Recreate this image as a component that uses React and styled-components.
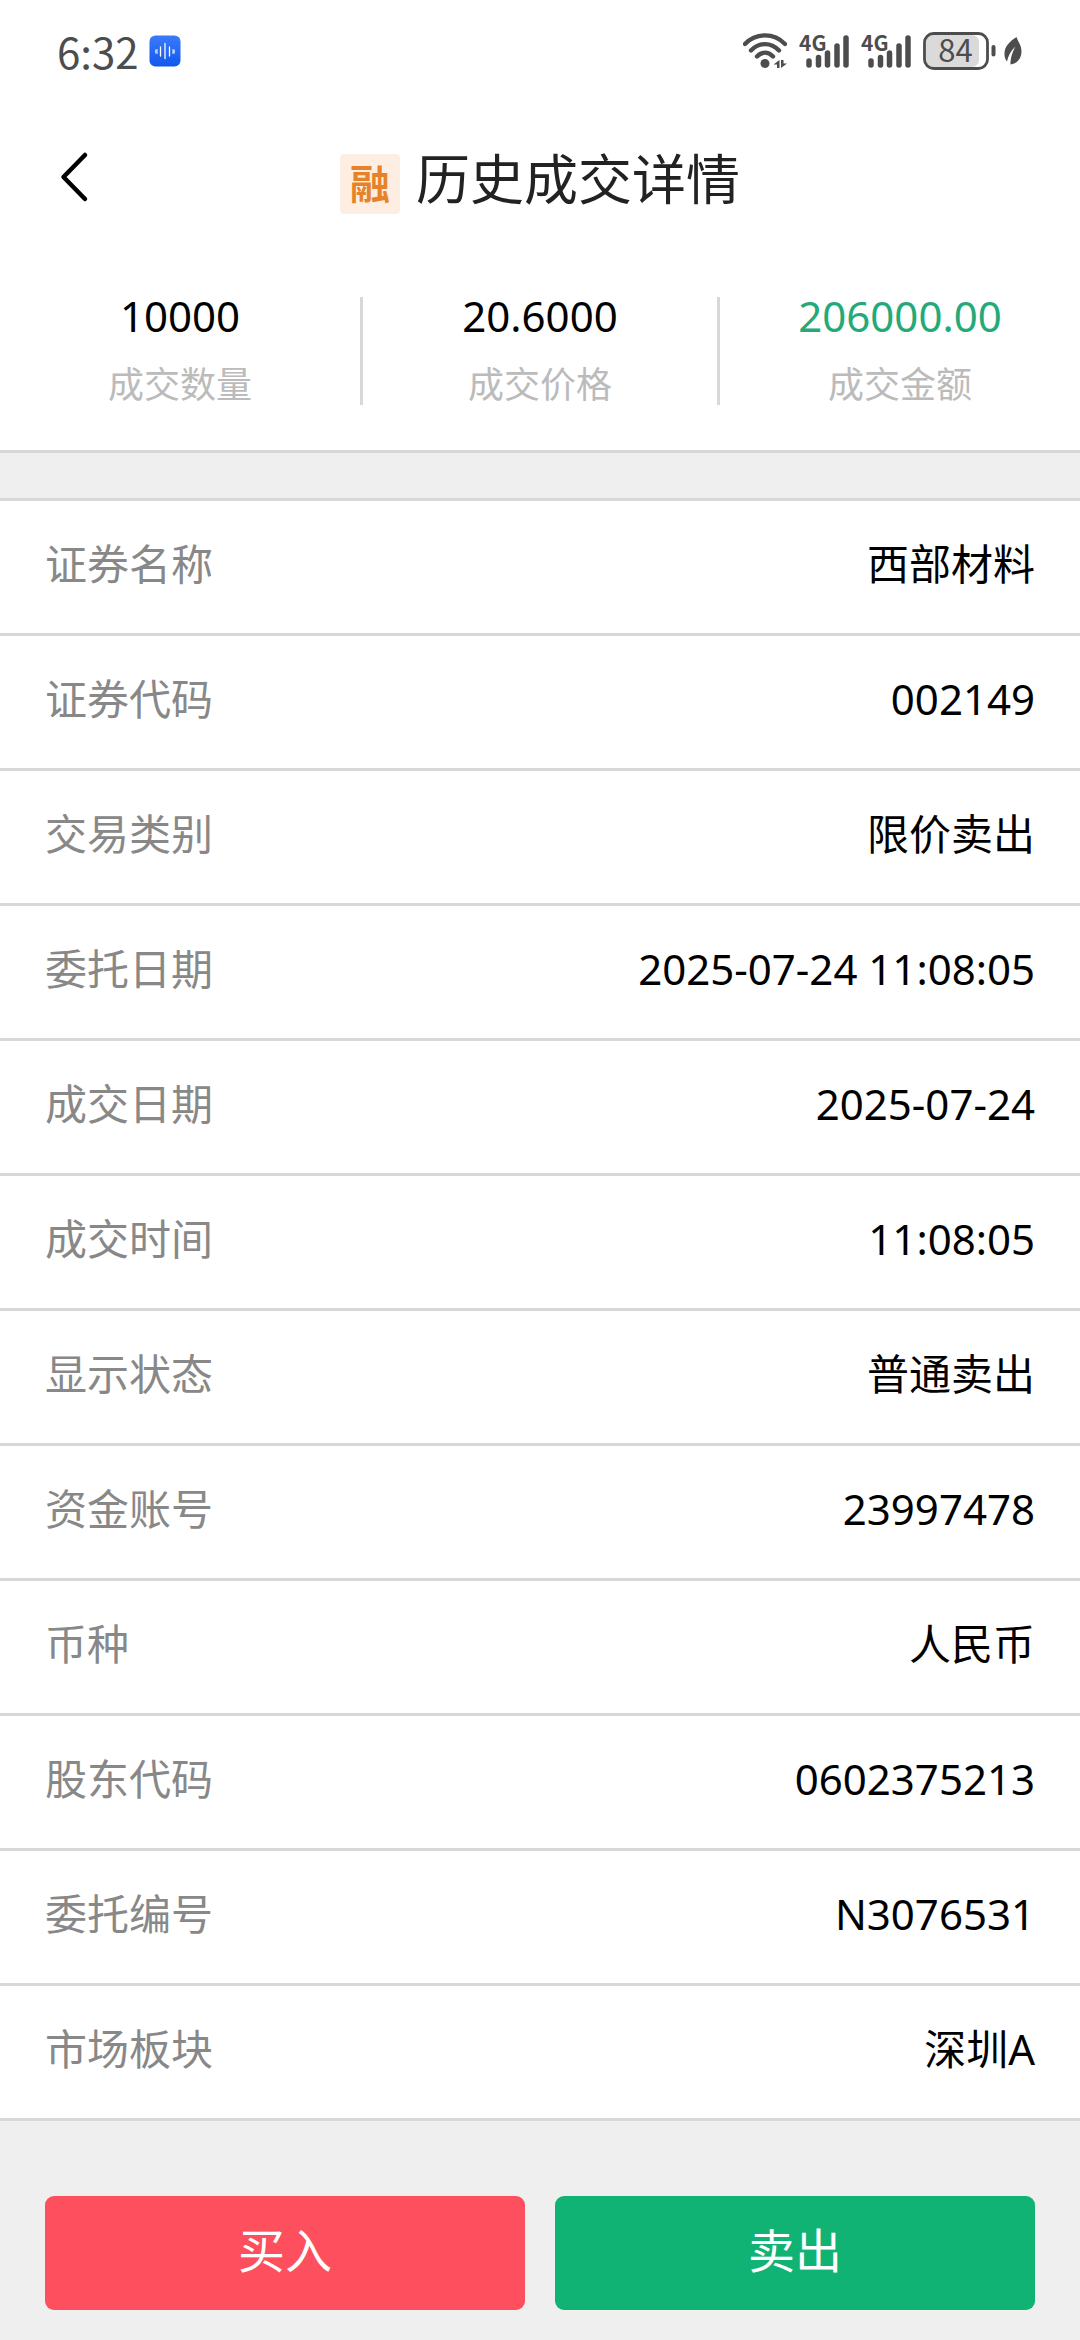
import styled, { createGlobalStyle } from "styled-components";

const GlobalStyle = createGlobalStyle`
  * {
    box-sizing: border-box;
  }
  body {
    margin: 0;
    background: #efefef;
    color: #000;
    font-family: "Noto Sans", "Noto Sans CJK SC", sans-serif;
  }
`

const Page = styled.div`
  min-height: 100vh;
  display: flex;
  flex-direction: column;
`

const StatusBar = styled.div`
  height: 104px;
  padding: 0 58px 2px 57px;
  display: flex;
  align-items: center;
  justify-content: space-between;
  background: #fff;
  color: #4d4d4d;
`

const StatusGroup = styled.div`
  display: flex;
  align-items: center;
  gap: ${(props) => props.$gap}px;
`

const Clock = styled.span`
  font-family: "Noto Sans CJK SC", sans-serif;
  font-size: 42px;
  line-height: 48px;
`

const Header = styled.header`
  height: 146px;
  padding: 0 45px;
  display: grid;
  grid-template-columns: 1fr auto 1fr;
  align-items: center;
  background: #fff;
`

const BackButton = styled.button`
  justify-self: start;
  display: flex;
  padding: 12px;
  border: 0;
  background: none;
  cursor: pointer;
`

const TitleGroup = styled.div`
  display: flex;
  align-items: center;
  gap: 16px;
`

const Badge = styled.span`
  width: 60px;
  height: 60px;
  margin-top: 14px;
  border-radius: 4px;
  background: #fdeee1;
  color: #e6832a;
  font-family: "Noto Sans CJK SC", sans-serif;
  font-size: 40px;
  font-weight: 700;
  line-height: 56px;
  text-align: center;
`

const Title = styled.h1`
  margin: 4px 0 0;
  color: #222;
  font-size: 54px;
  font-weight: 400;
  line-height: 60px;
`

const Summary = styled.section`
  padding: 47px 0 45px;
  display: grid;
  grid-template-columns: repeat(3, 1fr);
  border-bottom: 3px solid #d8d8d8;
  background: #fff;
`

const SummaryItem = styled.div`
  height: 108px;
  display: flex;
  flex-direction: column;
  align-items: center;
  gap: 24px;

  &:nth-child(2) {
    border-left: 3px solid #d8d8d8;
    border-right: 3px solid #d8d8d8;
  }
`

const SummaryValue = styled.span`
  color: ${(props) => (props.$green ? "#26a978" : "#000")};
  font-size: 42px;
  line-height: 38px;
`

const SummaryLabel = styled.span`
  color: #bbb;
  font-size: 36px;
  line-height: 52px;
`

const Details = styled.dl`
  margin: 45px 0 0;
  border-top: 3px solid #d8d8d8;
  background: #fff;
`

const Row = styled.div`
  height: 135px;
  padding: 0 45px 6px;
  display: flex;
  align-items: center;
  justify-content: space-between;
  border-bottom: 3px solid #d8d8d8;
  font-size: 42px;
  line-height: 60px;
`

const Label = styled.dt`
  color: #888;
`

const Value = styled.dd`
  margin: 0;
`

const Actions = styled.footer`
  padding: 75px 45px 30px;
  display: grid;
  grid-template-columns: 1fr 1fr;
  gap: 30px;
`

const ActionButton = styled.button`
  height: 114px;
  padding: 0 0 6px;
  border: 0;
  border-radius: 9px;
  background: ${(props) => (props.$sell ? "#11b374" : "#fd4f5d")};
  color: #fff;
  font-family: inherit;
  font-size: 47px;
  line-height: 60px;
  cursor: pointer;
`

const VoiceIcon = () => (
  <svg width="32" height="32" viewBox="0 0 32 32">
    <defs>
      <linearGradient id="voice" x1="0" y1="0" x2="0" y2="1">
        <stop offset="0" stopColor="#3a7bfb" />
        <stop offset="1" stopColor="#1257ee" />
      </linearGradient>
    </defs>
    <rect x="0.5" y="0.5" width="31" height="31" rx="6" fill="url(#voice)" />
    <path d="M7 15v3M11.500 12v9M16 8.500v15M20.500 12v9M25 15v3" stroke="#fff" strokeWidth="1.300" strokeLinecap="round" />
    <path d="M8.300 14v5M23.700 14v5" stroke="#fff" strokeWidth="0.600" />
  </svg>
)

const WifiIcon = () => (
  <svg width="44" height="36" viewBox="0 0 44 36" fill="none" stroke="#4d4d4d" strokeLinecap="round">
    <path d="M2 11C13 -0.500 31 -0.500 42 11" strokeWidth="4.400" />
    <path d="M8 17.500C16 9 28 9 36 17.500" strokeWidth="4.400" />
    <path d="M14 23.500C19 18.500 25 18.500 30 23.500" strokeWidth="4.400" />
    <circle cx="22" cy="30.500" r="4.500" fill="#4d4d4d" stroke="none" />
    <path d="M36.500 27v8h-2.500v-3.500h-3.500zM38 35v-8h2.500v3.500h3.500z" fill="#4d4d4d" stroke="none" />
  </svg>
)

/* extra room above and below the bars keeps the 4G line box inside */
const SignalIcon = () => (
  <svg width="50" height="60" viewBox="0 -12 50 60">
    <path d="M10 28v4M19.500 24.500v7.500M28.500 20v12M38 13v19M47 5v27" stroke="#4d4d4d" strokeWidth="5.500" strokeLinecap="round" />
    <text x="0" y="18" fill="#4d4d4d" stroke="#fff" strokeWidth="3" paintOrder="stroke" fontFamily="Noto Sans CJK SC, sans-serif" fontSize="21" fontWeight="700">4G</text>
  </svg>
)

const BatteryIcon = () => (
  <svg width="73" height="58" viewBox="0 -10 73 58">
    <rect x="3" y="3" width="53" height="32" rx="7" fill="#dadada" />
    <rect x="1.500" y="1.500" width="63" height="35" rx="9" fill="none" stroke="#4d4d4d" strokeWidth="2.800" />
    <rect x="68.500" y="13" width="4" height="11.500" rx="2" fill="#4d4d4d" />
    <text x="32.500" y="30" fill="#4d4d4d" textAnchor="middle" fontFamily="Noto Sans CJK SC, sans-serif" fontSize="31">84</text>
  </svg>
)

const LeafIcon = () => (
  <svg width="18" height="30" viewBox="0 0 18 30">
    <path d="M12.500 1C5 6 0 11 0.500 19c0.200 3 1.200 5 2.500 6.500C4 20 7 14.500 11.500 10.500C8.500 16 6.500 21 6.500 28.500C13 27.500 17.500 23 17.500 15.500C17.500 9 14 6 12.500 1z" fill="#4d4d4d" />
  </svg>
)

const BackIcon = () => (
  <svg width="32" height="52" viewBox="0 0 32 52" fill="none">
    <path d="M28 4L6.500 26L28 48" stroke="#000" strokeWidth="4.500" strokeLinecap="round" strokeLinejoin="round" />
  </svg>
)

const summary = [
  { label: "成交数量", value: "10000" },
  { label: "成交价格", value: "20.6000" },
  { label: "成交金额", value: "206000.00", green: true },
]

const details = [
  ["证券名称", "西部材料"],
  ["证券代码", "002149"],
  ["交易类别", "限价卖出"],
  ["委托日期", "2025-07-24 11:08:05"],
  ["成交日期", "2025-07-24"],
  ["成交时间", "11:08:05"],
  ["显示状态", "普通卖出"],
  ["资金账号", "23997478"],
  ["币种", "人民币"],
  ["股东代码", "0602375213"],
  ["委托编号", "N3076531"],
  ["市场板块", "深圳A"],
]

export default function App() {
  return (
    <Page lang="zh-CN">
      <GlobalStyle />
      <StatusBar>
        <StatusGroup $gap={10}>
          <Clock>6:32</Clock>
          <VoiceIcon />
        </StatusGroup>
        <StatusGroup $gap={12}>
          <WifiIcon />
          <SignalIcon />
          <SignalIcon />
          <StatusGroup $gap={8}>
            <BatteryIcon />
            <LeafIcon />
          </StatusGroup>
        </StatusGroup>
      </StatusBar>
      <Header>
        <BackButton type="button" aria-label="返回">
          <BackIcon />
        </BackButton>
        <TitleGroup>
          <Badge>融</Badge>
          <Title>历史成交详情</Title>
        </TitleGroup>
      </Header>
      <Summary>
        {summary.map((item) => (
          <SummaryItem key={item.label}>
            <SummaryValue $green={item.green}>{item.value}</SummaryValue>
            <SummaryLabel>{item.label}</SummaryLabel>
          </SummaryItem>
        ))}
      </Summary>
      <Details>
        {details.map(([label, value]) => (
          <Row key={label}>
            <Label>{label}</Label>
            <Value>{value}</Value>
          </Row>
        ))}
      </Details>
      <Actions>
        <ActionButton type="button">买入</ActionButton>
        <ActionButton type="button" $sell>卖出</ActionButton>
      </Actions>
    </Page>
  )
}
